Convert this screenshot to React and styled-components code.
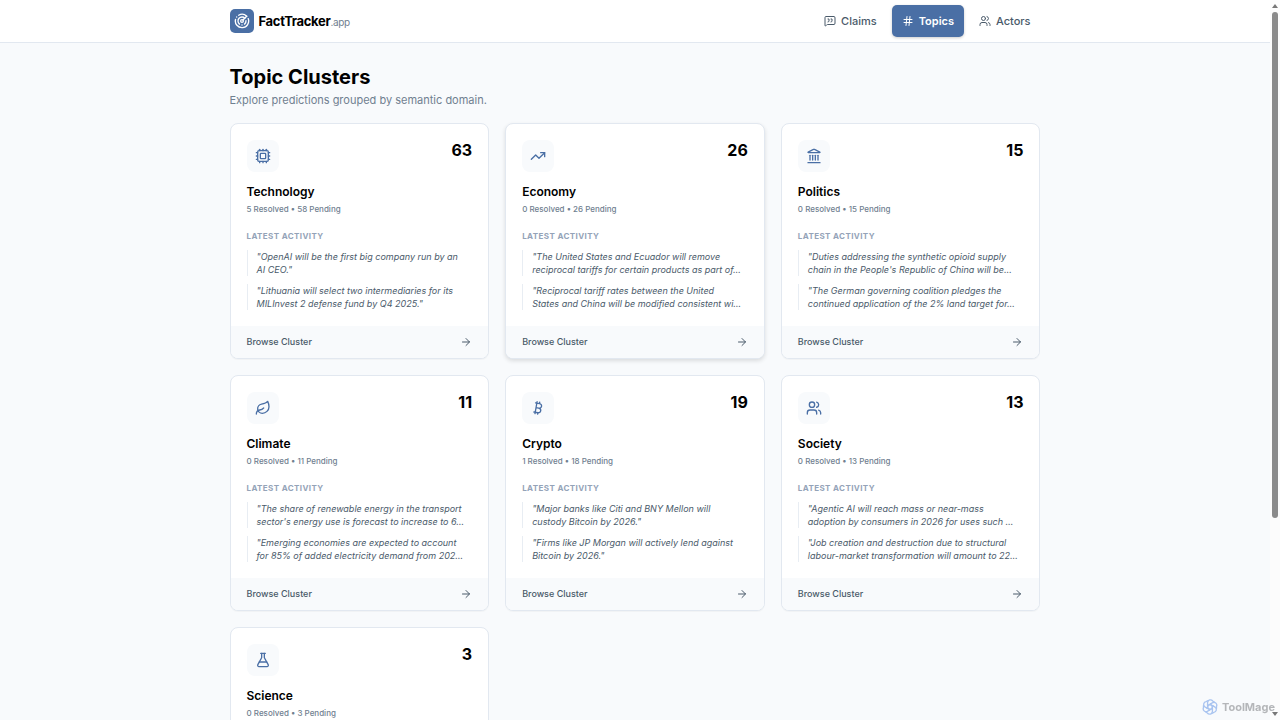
import React from "react";
import styled, { createGlobalStyle, css } from "styled-components";
import {
  ArrowRight, Bitcoin, Cpu, FlaskConical, Hash, Landmark, Leaf,
  MessageSquareQuote, Radar, TrendingUp, Users,
} from "lucide-react";

const GlobalStyle = createGlobalStyle`
  *, *::before, *::after { box-sizing: border-box; }
  body {
    margin: 0;
    background: #f8fafc;
    color: #000;
    font-family: Inter, "Liberation Sans", sans-serif;
    -webkit-font-smoothing: antialiased;
  }
  h1, h2, h3, p, ul { margin: 0; padding: 0; }
  ul { list-style: none; }
  a { color: inherit; text-decoration: none; }
`;

const Shell = styled.div`
  display: flex;
  height: 100vh;
`;

const ScrollArea = styled.div`
  flex: 1;
  min-width: 0;
  overflow-y: auto;
  scrollbar-width: none;
`;

const Container = styled.div`
  max-width: 811px;
  margin: 0 auto;
`;

const Header = styled.header`
  background: #fff;
  border-bottom: 1px solid #e2e8f0;
`;

const HeaderRow = styled(Container)`
  display: flex;
  align-items: center;
  justify-content: space-between;
  height: 42px;
`;

const Brand = styled.a`
  display: flex;
  align-items: center;
  gap: 5px;
`;

const LogoTile = styled.span`
  display: grid;
  place-items: center;
  width: 24px;
  height: 24px;
  border-radius: 5px;
  background: #4a6fa5;
  color: #fff;
`;

const BrandName = styled.span`
  font-size: 13px;
  line-height: 18px;
  font-weight: 700;
  letter-spacing: -0.025em;
`;

const BrandSuffix = styled.span`
  font-size: 10px;
  font-weight: 400;
  color: #708090;
`;

const Nav = styled.nav`
  display: flex;
  gap: 5px;
`;

const NavLink = styled.a`
  display: flex;
  align-items: center;
  gap: 5px;
  height: 32px;
  padding: 0 10px;
  border-radius: 5px;
  font-size: 11px;
  line-height: 16px;
  font-weight: 500;
  color: #4a5a6a;
  ${(p) => p.$active && css`
    background: #4a6fa5;
    color: #fff;
    font-weight: 600;
    box-shadow: 0 1px 3px rgba(0, 0, 0, 0.2);
  `}
`;

const Main = styled(Container).attrs({ as: "main" })`
  padding: 22px 0 32px;
`;

const PageTitle = styled.h1`
  font-size: 20px;
  line-height: 24px;
  font-weight: 700;
`;

const Subtitle = styled.p`
  margin-top: 3px;
  font-size: 11px;
  line-height: 16px;
  color: #708090;
`;

const Grid = styled.div`
  display: grid;
  grid-template-columns: repeat(3, minmax(0, 1fr));
  gap: 16px;
  margin-top: 15px;
`;

const Card = styled.article`
  display: flex;
  flex-direction: column;
  overflow: hidden;
  background: #fff;
  border: 1px solid #e2e8f0;
  border-radius: 8px;
  box-shadow: ${(p) => (p.$raised
    ? "0 2px 4px rgba(0, 0, 0, 0.12)"
    : "0 1px 1px rgba(0, 0, 0, 0.03)")};
`;

const CardBody = styled.div`
  flex: 1;
  padding: 16px;
`;

const CardTop = styled.div`
  display: flex;
  justify-content: space-between;
  align-items: flex-start;
`;

const IconTile = styled.span`
  display: grid;
  place-items: center;
  width: 32px;
  height: 32px;
  border-radius: 8px;
  background: #f8fafc;
  color: #4a6fa5;
`;

const Count = styled.span`
  font-size: 16px;
  line-height: 20px;
  font-weight: 700;
`;

const CardTitle = styled.h2`
  margin-top: 11px;
  font-size: 12px;
  line-height: 18px;
  font-weight: 600;
`;

const Meta = styled.p`
  margin-top: 2px;
  font-size: 8px;
  line-height: 12px;
  font-weight: 500;
  color: #708090;
`;

const ActivityLabel = styled.h3`
  margin-top: 15px;
  font-size: 8px;
  line-height: 12px;
  font-weight: 700;
  letter-spacing: 0.05em;
  text-transform: uppercase;
  color: #94a3b8;
`;

const QuoteList = styled.ul`
  display: grid;
  gap: 8px;
  margin-top: 8px;
`;

const Quote = styled.li`
  padding-left: 9px;
  border-left: 1px solid #e8edf3;
  font-size: 9px;
  line-height: 13px;
  font-style: italic;
  color: #4a5a6a;
  white-space: pre-line;
`;

const CardFooter = styled.a`
  display: flex;
  align-items: center;
  justify-content: space-between;
  height: 32px;
  padding: 0 16px;
  background: #f8fafc;
  font-size: 9px;
  line-height: 14px;
  font-weight: 500;
  color: #4a5a6a;
`;

const ScrollTrack = styled.div`
  display: flex;
  flex-direction: column;
  align-items: center;
  width: 10px;
  padding: 4px 0;
  background: #fcfcfc;
`;

const ScrollThumb = styled.div`
  width: 6px;
  height: 71%;
  margin: 4px 0 auto;
  border-radius: 3px;
  background: #8b8b8b;
`;

const Watermark = styled.div`
  position: fixed;
  right: 5px;
  bottom: 5px;
  display: flex;
  align-items: center;
  gap: 4px;
  font-size: 11px;
  line-height: 16px;
  font-weight: 700;
  color: #b4b6b9;
`;

const topics = [
  { name: "Technology", icon: Cpu, count: 63, resolved: 5, quotes: ["\"OpenAI will be the first big company run by an\nAI CEO.\"", "\"Lithuania will select two intermediaries for its\nMILInvest 2 defense fund by Q4 2025.\""] },
  { name: "Economy", icon: TrendingUp, count: 26, resolved: 0, raised: true, quotes: ["\"The United States and Ecuador will remove\nreciprocal tariffs for certain products as part of…", "\"Reciprocal tariff rates between the United\nStates and China will be modified consistent wi…"] },
  { name: "Politics", icon: Landmark, count: 15, resolved: 0, quotes: ["\"Duties addressing the synthetic opioid supply\nchain in the People's Republic of China will be…", "\"The German governing coalition pledges the\ncontinued application of the 2% land target for…"] },
  { name: "Climate", icon: Leaf, count: 11, resolved: 0, quotes: ["\"The share of renewable energy in the transport\nsector's energy use is forecast to increase to 6…", "\"Emerging economies are expected to account\nfor 85% of added electricity demand from 202…"] },
  { name: "Crypto", icon: Bitcoin, count: 19, resolved: 1, quotes: ["\"Major banks like Citi and BNY Mellon will\ncustody Bitcoin by 2026.\"", "\"Firms like JP Morgan will actively lend against\nBitcoin by 2026.\""] },
  { name: "Society", icon: Users, count: 13, resolved: 0, quotes: ["\"Agentic AI will reach mass or near-mass\nadoption by consumers in 2026 for uses such …", "\"Job creation and destruction due to structural\nlabour-market transformation will amount to 22…"] },
  { name: "Science", icon: FlaskConical, count: 3, resolved: 0, quotes: [] },
];

function TopicCard({ topic }) {
  const Icon = topic.icon;
  return (
    <Card $raised={topic.raised}>
      <CardBody>
        <CardTop>
          <IconTile><Icon size={16} /></IconTile>
          <Count>{topic.count}</Count>
        </CardTop>
        <CardTitle>{topic.name}</CardTitle>
        <Meta>{topic.resolved} Resolved • {topic.count - topic.resolved} Pending</Meta>
        <ActivityLabel>Latest Activity</ActivityLabel>
        <QuoteList>
          {topic.quotes.map((q) => <Quote key={q}>{q}</Quote>)}
        </QuoteList>
      </CardBody>
      <CardFooter href="#">Browse Cluster<ArrowRight size={12} /></CardFooter>
    </Card>
  );
}

function KnotLogo() {
  return (
    <svg width="16" height="16" viewBox="0 0 24 24" fill="none" stroke="#a9c4f0" strokeWidth="2" aria-hidden="true">
      {[0, 60, 120, 180, 240, 300].map((a) => (
        <path key={a} transform={`rotate(${a} 12 12)`} d="M12 8.2 15.6 10.2V16.4M8.4 9.8V5.2A4.2 4.2 0 0 1 16 3L19 4.8" />
      ))}
    </svg>
  );
}

export default function App() {
  return (
    <>
      <GlobalStyle />
      <Shell>
        <ScrollArea>
          <Header>
            <HeaderRow>
              <Brand href="#">
                <LogoTile><Radar size={16} /></LogoTile>
                <BrandName>FactTracker<BrandSuffix>.app</BrandSuffix></BrandName>
              </Brand>
              <Nav>
                <NavLink href="#"><MessageSquareQuote size={12} />Claims</NavLink>
                <NavLink href="#" $active aria-current="page"><Hash size={12} />Topics</NavLink>
                <NavLink href="#"><Users size={12} />Actors</NavLink>
              </Nav>
            </HeaderRow>
          </Header>
          <Main>
            <PageTitle>Topic Clusters</PageTitle>
            <Subtitle>Explore predictions grouped by semantic domain.</Subtitle>
            <Grid>
              {topics.map((t) => <TopicCard key={t.name} topic={t} />)}
            </Grid>
          </Main>
        </ScrollArea>
        <ScrollTrack aria-hidden="true">
          <svg width="6" height="4" viewBox="0 0 6 4"><path d="M3 0 6 4H0Z" fill="#777" /></svg>
          <ScrollThumb />
          <svg width="6" height="4" viewBox="0 0 6 4"><path d="M0 0H6L3 4Z" fill="#777" /></svg>
        </ScrollTrack>
      </Shell>
      <Watermark><KnotLogo />ToolMage</Watermark>
    </>
  );
}
